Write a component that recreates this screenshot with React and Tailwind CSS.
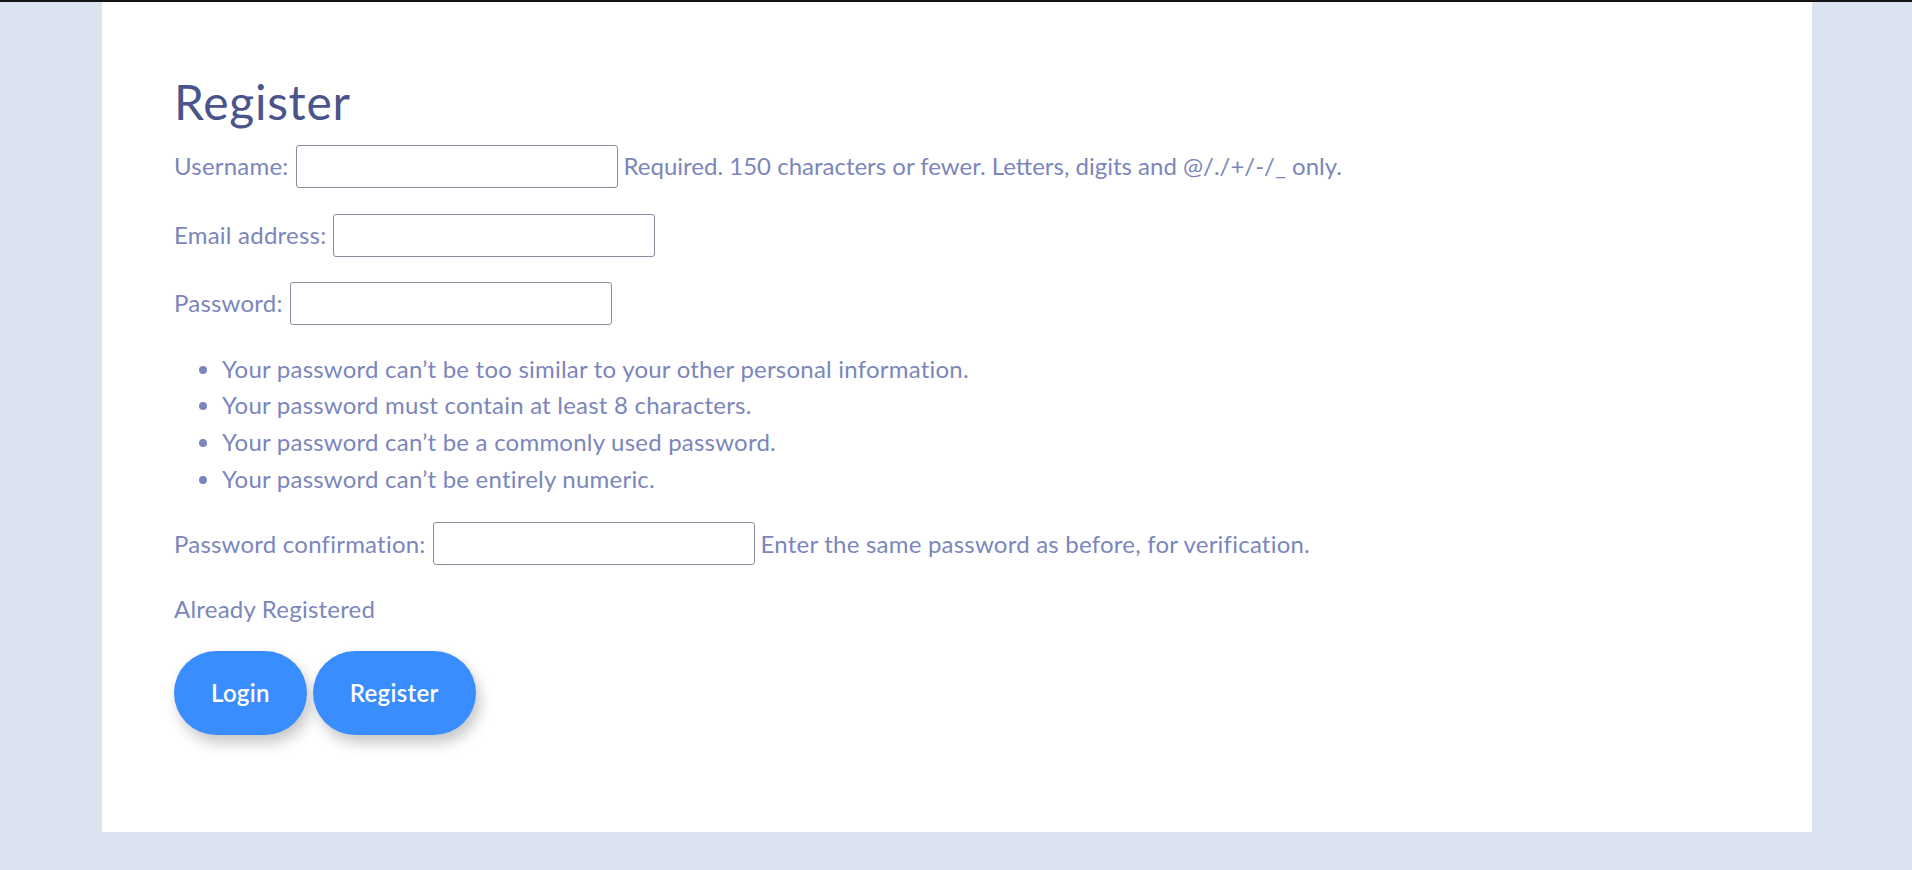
import React from 'react'

const rules = [
  'Your password can’t be too similar to your other personal information.',
  'Your password must contain at least 8 characters.',
  'Your password can’t be a commonly used password.',
  'Your password can’t be entirely numeric.',
]

function Field({ label, help, type = 'text', className = '', helpClass = '' }) {
  return (
    <div className={`flex items-center h-[43px] ${className}`}>
      <label className="mr-[7px]">{label}</label>
      <input type={type} className="w-[322px] h-[43px] border border-[#8b8b9e] rounded-[3px] bg-white" />
      {help && <span className={`ml-[6px] ${helpClass}`}>{help}</span>}
    </div>
  )
}

export default function App() {
  return (
    <div className="min-h-[870px] bg-[#dbe3f1] border-t-2 border-[#141414]" style={{ fontFamily: 'Lato, "Noto Sans", sans-serif' }}>
      <div className="ml-[102px] w-[1710px] h-[830px] bg-white pl-[72px] pt-[71px] text-[24px] leading-[36px] tracking-[0.22px] text-[#7b86bb]">
        <h1 className="text-[48px] leading-[57.6px] tracking-[0.7px] text-[#4b548a]">Register</h1>

        <Field className="mt-[14px]" label="Username:" helpClass="tracking-normal" help="Required. 150 characters or fewer. Letters, digits and @/./+/-/_ only." />
        <Field className="mt-[26px]" label="Email address:" type="email" />
        <Field className="mt-[25px]" label="Password:" type="password" />

        <ul className="list-disc pl-[48px] mt-[26px] leading-[36.7px] marker:text-[#7b86bb]">
          {rules.map(r => (
            <li key={r}>{r}</li>
          ))}
        </ul>

        <Field className="mt-[25px]" label="Password confirmation:" type="password" help="Enter the same password as before, for verification." />

        <p className="mt-[26px]">Already Registered</p>

        <div className="flex gap-[6px] mt-[24px]">
          <button className="h-[84px] px-[37px] rounded-full bg-[#3a8dfe] text-white font-semibold tracking-[0.3px] shadow-[4px_8px_14px_rgba(0,0,0,0.22)]">Login</button>
          <button className="h-[84px] px-[37px] rounded-full bg-[#3a8dfe] text-white font-semibold tracking-[0.3px] shadow-[4px_8px_14px_rgba(0,0,0,0.22)]">Register</button>
        </div>
      </div>
    </div>
  )
}
